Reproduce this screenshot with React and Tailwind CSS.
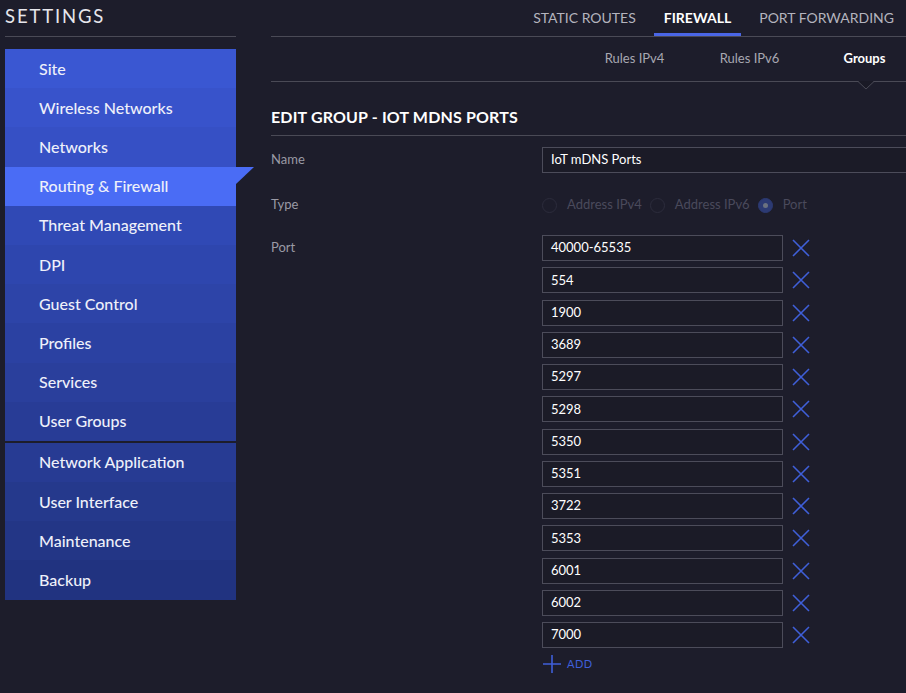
import React from "react";

const group1 = [
  ["Site", "#3a57d2"],
  ["Wireless Networks", "#3853cb"],
  ["Networks", "#3650c5"],
  ["Routing & Firewall", "#4a6cf5", true],
  ["Threat Management", "#3049b5"],
  ["DPI", "#2e46ae"],
  ["Guest Control", "#2d44a8"],
  ["Profiles", "#2b41a2"],
  ["Services", "#2a3f9c"],
  ["User Groups", "#283c96"],
];
const group2 = [
  ["Network Application", "#273b93"],
  ["User Interface", "#25398c"],
  ["Maintenance", "#233686"],
  ["Backup", "#213380"],
];

const ports = ["40000-65535", "554", "1900", "3689", "5297", "5298", "5350", "5351", "3722", "5353", "6001", "6002", "7000"];

function NavItem({ label, color, active }) {
  return (
    <div
      className="relative h-[39.2px] flex items-center pl-[34px] text-[16px] font-medium text-[#eef0fa]"
      style={{ backgroundColor: color }}
    >
      {label}
      {active && (
        <svg className="absolute left-full top-0" width="18" height="18" viewBox="0 0 18 18">
          <polygon points="0,0 18,0 0,17" fill={color} />
        </svg>
      )}
    </div>
  );
}

function XIcon() {
  return (
    <svg width="18" height="18" viewBox="0 0 18 18" className="text-[#3f5fd9]">
      <path d="M1 1 L17 17 M17 1 L1 17" stroke="currentColor" strokeWidth="1.6" fill="none" />
    </svg>
  );
}

function Radio({ checked }) {
  return (
    <span
      className={
        "w-[15px] h-[15px] rounded-full flex items-center justify-center border " +
        (checked ? "bg-[#2c3a73] border-[#2c3a73]" : "border-[#2c2c3c]")
      }
    >
      {checked && <span className="w-[5px] h-[5px] rounded-full bg-[#6b7280]" />}
    </span>
  );
}

export default function App() {
  return (
    <div
      className="w-[906px] h-[693px] overflow-hidden bg-[#1d1d2b] flex"
      style={{ fontFamily: "Lato, 'Open Sans', sans-serif" }}
    >
      {/* Sidebar */}
      <div className="w-[231px] ml-[5px] shrink-0 flex flex-col">
        <div className="h-[37px] border-b border-[#4a4a56] flex items-start pt-[4px]">
          <span className="text-[18.5px] tracking-[0.1em] text-[#e6e6ec] leading-[24px]">SETTINGS</span>
        </div>
        <div className="mt-[12px] flex flex-col">
          {group1.map(([l, c, a]) => (
            <NavItem key={l} label={l} color={c} active={a} />
          ))}
        </div>
        <div className="h-[2px]" />
        <div className="flex flex-col">
          {group2.map(([l, c]) => (
            <NavItem key={l} label={l} color={c} />
          ))}
        </div>
      </div>

      {/* Main */}
      <div className="ml-[35px] flex-1 min-w-0 flex flex-col">
        {/* top tabs */}
        <div className="h-[37px] border-b border-[#4a4a56] flex justify-end items-stretch gap-[8px] pr-[2px] text-[14px]">
          <div className="px-[10px] flex items-start pt-[7px] text-[#b4b4be]">STATIC ROUTES</div>
          <div className="relative px-[10px] flex items-start pt-[7px] text-white font-bold">
            FIREWALL
            <div className="absolute left-0 right-0 bottom-0 h-[3px] bg-[#4a66e6]" />
          </div>
          <div className="px-[10px] flex items-start pt-[7px] text-[#b4b4be]">PORT FORWARDING</div>
        </div>
        {/* sub tabs */}
        <div className="relative h-[45px] border-b border-[#4a4a56] flex items-center text-[13px] pl-[306px]">
          <div className="w-[115px] shrink-0 text-center text-[#a8a8b2]">Rules IPv4</div>
          <div className="w-[115px] shrink-0 text-center text-[#a8a8b2]">Rules IPv6</div>
          <div className="w-[115px] shrink-0 text-center text-white font-bold">Groups</div>
          <svg className="absolute left-[587px] top-[44px]" width="16" height="9" viewBox="0 0 16 9">
            <polygon points="0,0 16,0 8,8" fill="#1a1a26" />
            <path d="M0 0.5 L8 8 L16 0.5" stroke="#4a4a56" fill="none" strokeWidth="1" />
          </svg>
        </div>
        {/* title */}
        <div className="h-[54px] border-b border-[#4a4a56] flex items-end pb-[6px]">
          <span className="text-[16px] font-bold text-white tracking-[0.01em]">EDIT GROUP - IOT MDNS PORTS</span>
        </div>
        {/* form */}
        <div className="pt-[11px] flex flex-col text-[13px]">
          <div className="flex items-center h-[26px]">
            <div className="w-[271px] text-[#9a9aa5]">Name</div>
            <div className="flex-1 h-[26px] border border-[#4c4c5a] bg-[#1b1b27] flex items-center pl-[8px] text-white -mr-[20px]">
              IoT mDNS Ports
            </div>
          </div>
          <div className="flex items-center h-[26px] mt-[19px]">
            <div className="w-[271px] text-[#9a9aa5]">Type</div>
            <div className="flex items-center text-[#4a4a5c] text-[13px]">
              <Radio />
              <span className="ml-[10px] mr-[8px]">Address IPv4</span>
              <Radio />
              <span className="ml-[10px] mr-[8px]">Address IPv6</span>
              <Radio checked />
              <span className="ml-[10px]">Port</span>
            </div>
          </div>
          <div className="flex items-start mt-[17px]">
            <div className="w-[271px] text-[#9a9aa5] h-[26px] flex items-center">Port</div>
            <div className="flex flex-col gap-[6.25px]">
              {ports.map((p) => (
                <div key={p} className="flex items-center">
                  <div className="w-[241px] h-[26px] border border-[#4c4c5a] bg-[#1b1b27] flex items-center pl-[8px] text-white">
                    {p}
                  </div>
                  <div className="ml-[9px]">
                    <XIcon />
                  </div>
                </div>
              ))}
              <div className="flex items-center mt-[1px] ml-[1px]">
                <svg width="18" height="18" viewBox="0 0 18 18" className="text-[#3f5fd9]">
                  <path d="M9 0 V18 M0 9 H18" stroke="currentColor" strokeWidth="1.6" fill="none" />
                </svg>
                <span className="ml-[6px] text-[11px] text-[#3f5fd9] tracking-[0.04em]">ADD</span>
              </div>
            </div>
          </div>
        </div>
      </div>
    </div>
  );
}
